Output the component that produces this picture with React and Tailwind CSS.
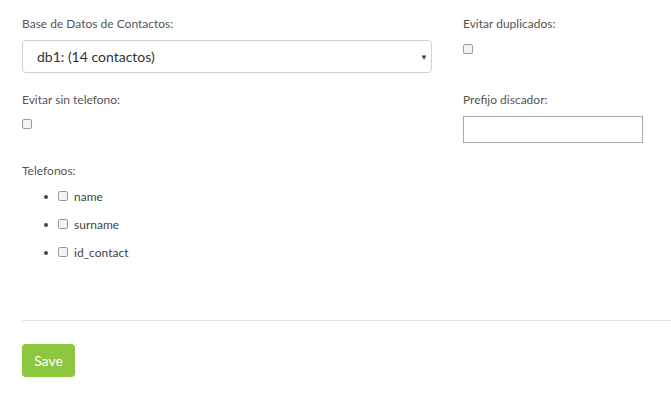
import React from 'react'

const Check = () => (
    <span className="inline-block w-[10px] h-[10px] rounded-[2px] border border-[#9a9a9a] bg-[#f3f3f3]" />
)

const App = () => {
    const phones = ["name", "surname", "id_contact"]

    return (
        <div className="w-[671px] h-[397px] bg-white pl-[22px] pt-[16px] text-[#555] overflow-hidden" style={{ fontFamily: 'Lato, "Open Sans", sans-serif' }}>
            <div className="flex">
                {/* left column */}
                <div className="w-[410px]">
                    <div className="text-[12px] leading-[16px]">Base de Datos de Contactos:</div>
                    <div className="mt-[8px] h-[33px] w-[410px] border border-[#d0d0d0] rounded-[4px] flex items-center justify-between pl-[14px] pr-[3px]">
                        <span className="text-[14px] text-[#333]">db1: (14 contactos)</span>
                        <span className="text-[8px] text-[#444]">▼</span>
                    </div>
                    <div className="mt-[19px] text-[12px] leading-[16px]">Evitar sin telefono:</div>
                    <div className="mt-[11px] h-[10px] flex"><Check /></div>
                </div>
                {/* right column */}
                <div className="ml-[31px] w-[179px]">
                    <div className="text-[12px] leading-[16px]">Evitar duplicados:</div>
                    <div className="mt-[12px] h-[10px] flex"><Check /></div>
                    <div className="mt-[38px] text-[12px] leading-[16px]">Prefijo discador:</div>
                    <div className="mt-[8px] h-[27px] w-[180px] border border-[#aaa]" />
                </div>
            </div>

            <div className="mt-[20px] text-[12px] leading-[16px]">Telefonos:</div>
            <ul className="mt-[4px] pl-[22px]">
                {phones.map((p) => (
                    <li key={p} className="h-[28px] flex items-center text-[12px] text-[#444]">
                        <span className="w-[4px] h-[4px] rounded-full bg-[#444] mr-[10px]" />
                        <span className="-mt-[3px] flex"><Check /></span>
                        <span className="ml-[6px]">{p}</span>
                    </li>
                ))}
            </ul>

            <div className="mt-[53px] border-t border-[#e5e5e5]" />

            <button className="mt-[23px] h-[33px] w-[53px] rounded-[4px] bg-[#8dc63f] text-white text-[14px]">Save</button>
        </div>
    )
}

export default App
